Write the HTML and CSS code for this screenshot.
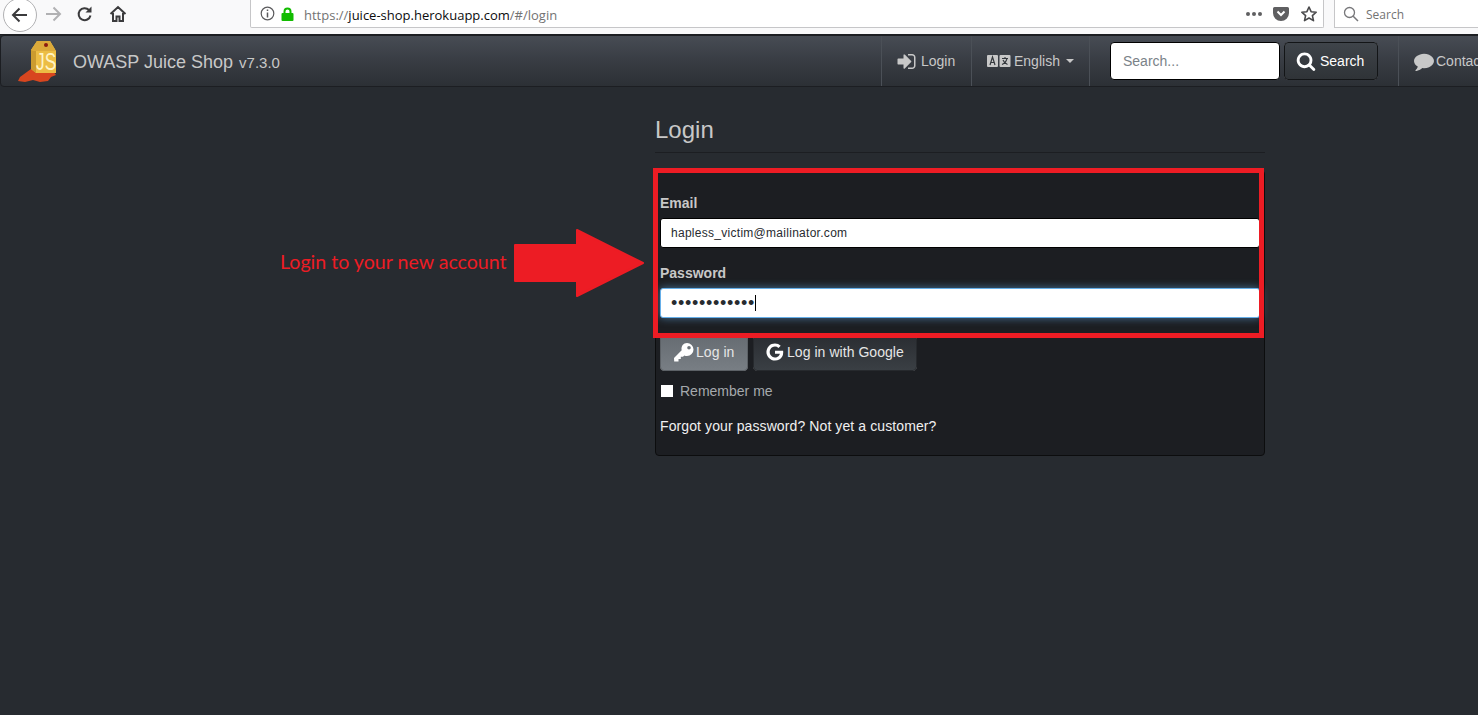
FILE: index.html
```html
<!DOCTYPE html>
<html lang="en">
<head>
  <meta charset="UTF-8">
  <title>OWASP Juice Shop</title>
  <link rel="stylesheet" href="styles.css">
</head>
<body>
<div id="app">

  <!-- browser toolbar -->
  <div class="toolbar">
    <div class="tool-back">
      <svg width="20" height="20" viewBox="0 0 20 20"><path d="M17 10H3M9.500 3.500L3 10l6.500 6.500" fill="none" stroke="#3b3b3d" stroke-width="2"/></svg>
    </div>
    <div class="tool-btn tool-forward">
      <svg width="20" height="20" viewBox="0 0 20 20"><path d="M3 10h14M10.500 3.500L17 10l-6.500 6.500" fill="none" stroke="#b1b1b3" stroke-width="2"/></svg>
    </div>
    <div class="tool-btn tool-reload">
      <svg width="18" height="18" viewBox="0 0 18 18"><path d="M14.500 10.500A6 6 0 1 1 13 5" fill="none" stroke="#3b3b3d" stroke-width="2"/><path d="M15.500 1.500v6h-6z" fill="#3b3b3d"/></svg>
    </div>
    <div class="tool-btn tool-home">
      <svg width="18" height="18" viewBox="0 0 18 18"><path d="M1.500 9L9 2l7.500 7M4 8v8h3.500v-4.500h3V16H14V8" fill="none" stroke="#3b3b3d" stroke-width="2"/></svg>
    </div>

    <div class="urlbar">
      <svg class="url-info" width="15" height="15" viewBox="0 0 15 15"><circle cx="7.500" cy="7.500" r="6.300" fill="none" stroke="#5a5a5c" stroke-width="1.200"/><path d="M7.500 6.500v5M7.500 3.500v1.600" stroke="#5a5a5c" stroke-width="1.500"/></svg>
      <svg class="url-lock" width="13" height="14" viewBox="0 0 13 14"><path d="M3.500 7V4.500a3 3 0 0 1 6 0V7" fill="none" stroke="#12bc00" stroke-width="2"/><rect x="0.500" y="6" width="12" height="8" rx="1" fill="#12bc00"/></svg>
      <span class="url-text"><span class="url-dim">https://</span>juice-shop.herokuapp.com<span class="url-dim">/#/login</span></span>
      <div class="url-actions">
        <span class="url-dots"><i></i><i></i><i></i></span>
        <svg width="16" height="16" viewBox="0 0 16 16"><path d="M1.500 1h13A1.500 1.500 0 0 1 16 2.500V7A8 8 0 0 1 0 7V2.500A1.500 1.500 0 0 1 1.500 1z" fill="#5f5f61"/><path d="M4.500 5.500L8 9l3.500-3.500" fill="none" stroke="#fff" stroke-width="2"/></svg>
        <svg width="18" height="18" viewBox="0 0 18 18"><path d="M9 2l2.100 4.700 5.100.5-3.800 3.400 1.100 5L9 13l-4.500 2.600 1.100-5L1.800 7.200l5.100-.5z" fill="none" stroke="#4a4a4c" stroke-width="1.600" stroke-linejoin="round"/></svg>
      </div>
    </div>

    <div class="searchbar">
      <svg width="16" height="16" viewBox="0 0 16 16"><circle cx="6.500" cy="6.500" r="5" fill="none" stroke="#77777a" stroke-width="1.300"/><path d="M10.200 10.200L15 15" stroke="#77777a" stroke-width="1.500"/></svg>
      <span class="searchbar-text">Search</span>
    </div>
  </div>

  <!-- site navbar -->
  <nav class="navbar">
    <a class="brand">
      <svg class="logo" width="41" height="44" viewBox="0 0 41 44">
        <path d="M1 41l2-4 11-8 6 3 16-1 3 4-5 2-3 4-8 1-7-2-8 2z" fill="#d8461f"/>
        <path d="M20 1h13l6 10v22H19l-5-4V10z" fill="#ecbd44"/>
        <path d="M14 10l5 1v22l-5-4z" fill="#cb9b2f"/>
        <path d="M20 1h13l6 10-20 0-5-1z" fill="#dcaa3a"/>
        <circle cx="29" cy="5" r="2" fill="#8b1a10"/>
        <text class="logo-js" transform="translate(19 30) scale(.72 1)">JS</text>
      </svg>
      <span class="brand-name">OWASP Juice Shop</span>
      <span class="brand-version">v7.3.0</span>
    </a>

    <a class="nav-item nav-login">
      <svg class="icon-signin" width="21" height="21" viewBox="0 0 1792 1792"><path d="M1312 896q0 26-19 45l-544 544q-19 19-45 19t-45-19-19-45v-288h-448q-26 0-45-19t-19-45v-384q0-26 19-45t45-19h448v-288q0-26 19-45t45-19 45 19l544 544q19 19 19 45zm352-352v704q0 119-84.500 203.500t-203.500 84.500h-320q-13 0-22.500-9.500t-9.500-22.500q0-4-1-20t-.5-26.500 3-23.500 10-19.500 20.500-6.500h320q66 0 113-47t47-113v-704q0-66-47-113t-113-47h-312l-11.500-1-11.500-3-8-5.500-7-9-2-13.500q0-4-1-20t-.5-26.500 3-23.500 10-19.500 20.500-6.500h320q119 0 203.500 84.500t84.500 203.500z"/></svg>
      Login
    </a>
    <a class="nav-item nav-lang">
      <svg class="icon-lang" width="24" height="12" viewBox="0 0 24 12">
        <rect width="11" height="12" rx="1"/><rect x="12.500" width="11" height="12" rx="1"/>
        <path d="M3 10l2.500-8 2.500 8M3.800 7.500h3.400" fill="none" stroke="#33373c" stroke-width="1.200"/>
        <path d="M15 3.500h6M18 2v1.500M20 3.500c-.8 3-2.700 5-5 6M16 5c.8 2 2.500 3.600 4.500 4.500" fill="none" stroke="#33373c" stroke-width="1.100"/>
      </svg>
      English
      <span class="caret"></span>
    </a>

    <form class="nav-search">
      <input class="search-input" type="text" placeholder="Search...">
      <button class="search-btn" type="button">
        <svg width="20" height="20" viewBox="0 0 1792 1792"><path fill="#fff" d="M1216 832q0-185-131.500-316.500t-316.500-131.500-316.500 131.500-131.500 316.500 131.500 316.500 316.500 131.500 316.500-131.500 131.500-316.500zm512 832q0 52-38 90t-90 38q-54 0-90-38l-343-342q-179 124-399 124-143 0-273.500-55.500t-225-150-150-225-55.500-273.500 55.500-273.500 150-225 225-150 273.500-55.500 273.500 55.500 225 150 150 225 55.500 273.500q0 220-124 399l343 343q37 37 37 90z"/></svg>
        Search
      </button>
    </form>

    <a class="nav-item nav-contact">
      <svg class="icon-comment" width="20" height="20" viewBox="0 0 1792 1792"><path d="M1792 896q0 174-120 321.500t-326 233-450 85.500q-70 0-145-8-198 175-460 242-49 14-114 22-17 2-30.500-9t-17.500-29v-1q-3-4-.5-12t2-10 4.500-9.500l6-9 7-8.500 8-9q7-8 31-34.500t34.500-38 31-39.500 32.500-51 27-59 26-76q-157-89-247.500-220t-90.500-281q0-130 71-248.500t191-204.500 286-136.500 348-50.500q244 0 450 85.500t326 233 120 321.500z"/></svg>
      Contact Us
    </a>
  </nav>

  <!-- login form -->
  <main class="login">
    <h3 class="login-title">Login</h3>
    <div class="well">
      <div class="form-group">
        <label>Email</label>
        <input class="form-input" type="text" value="hapless_victim@mailinator.com">
      </div>
      <div class="form-group">
        <label>Password</label>
        <div class="input-wrap">
          <input class="form-input form-input-focus" type="password" value="xxxxxxxxxxxx">
          <span class="input-caret"></span>
        </div>
      </div>
      <div class="form-buttons">
        <button class="btn btn-primary" type="button">
          <svg class="icon-key" width="21" height="20" viewBox="0 0 21 20">
            <path d="M14 1a6.500 6.500 0 0 1 0 13c-1 0-1.900-.2-2.700-.6L10 14.700H7.800V17H5.500v2.400H1.200L1 16l7.700-7.800C7.800 4.200 10.500 1 14 1zm2 3a1.800 1.800 0 1 0 0 3.600A1.800 1.800 0 0 0 16 4z" fill-rule="evenodd"/>
          </svg>
          Log in
        </button>
        <button class="btn btn-default" type="button">
          <svg width="20" height="20" viewBox="0 0 1792 1792"><path fill="#fff" d="M896 786h725q12 67 12 128 0 217-91 387.500t-259.500 266.500-386.500 96q-157 0-299-60.500t-245-163.500-163.500-245-60.500-299 60.500-299 163.500-245 245-163.500 299-60.500q300 0 515 201l-209 201q-123-119-306-119-129 0-238.500 65t-173.500 176.500-64 243.500 64 243.500 173.500 176.500 238.500 65q87 0 160-24t120-60 82-82 51.500-87 22.500-78h-436v-264z"/></svg>
          Log in with Google
        </button>
      </div>
      <div class="remember"><span class="check"></span>Remember me</div>
      <div class="forgot"><a>Forgot your password?</a> <a>Not yet a customer?</a></div>
    </div>
  </main>

  <!-- annotation drawn over the screenshot -->
  <div class="note-box"></div>
  <span class="note-text">Login to your new account</span>
  <svg class="note-arrow" width="132" height="70" viewBox="0 0 132 70">
    <path d="M2 17h62V2l66 33-66 33V53H2z" fill="#ed1c24" stroke="#ed1c24" stroke-width="2" stroke-linejoin="round"/>
  </svg>
</div>
</body>
</html>
```

FILE: styles.css
```css
html, body {
  margin: 0;
  height: 100%;
  overflow: hidden;
}

body {
  background-color: #272b30;
  font-family: "Liberation Sans", Arial, sans-serif;
  font-size: 14px;
  line-height: 20px;
  color: #c8c8c8;
}

#app {
  position: relative;
  height: 715px;
  overflow: hidden;
}

/* browser toolbar */
.toolbar {
  display: flex;
  align-items: flex-start;
  height: 35px;
  box-sizing: border-box;
  background-color: #f9f9fa;
  overflow: hidden;
  border-bottom: 1px solid #1c1e22;
}

.tool-back {
  display: flex;
  align-items: center;
  justify-content: center;
  flex: none;
  width: 32px;
  height: 32px;
  margin: -2px 0 0 3px;
  border: 1px solid #b1b1b3;
  border-radius: 50%;
  background-color: #fff;
}

.tool-btn {
  display: flex;
  align-items: center;
  justify-content: center;
  flex: none;
  height: 28px;
}

.tool-forward { width: 20px; margin-left: 6px; }
.tool-reload { width: 18px; margin-left: 13px; }
.tool-home { width: 18px; margin-left: 15px; }

.urlbar {
  display: flex;
  align-items: center;
  flex: none;
  width: 1074px;
  height: 28px;
  margin-left: 123px;
  padding-left: 9px;
  box-sizing: border-box;
  background-color: #fff;
  border: 1px solid #c6c6c8;
  border-top: 0;
  border-radius: 0 0 2px 2px;
}

.url-lock { margin-left: 6px; }

.url-text {
  margin: 2px 0 0 10px;
  font-family: "Open Sans", sans-serif;
  font-size: 13px;
  color: #0c0c0d;
}

.url-dim { color: #737373; }

.url-actions {
  display: flex;
  align-items: center;
  gap: 11px;
  margin-left: auto;
  padding-right: 5px;
}

.url-dots {
  display: flex;
  gap: 2px;
}

.url-dots i {
  width: 4px;
  height: 4px;
  border-radius: 50%;
  background-color: #5f5f61;
}

.searchbar {
  display: flex;
  align-items: center;
  flex: none;
  gap: 7px;
  width: 200px;
  height: 28px;
  margin-left: 10px;
  padding-left: 8px;
  box-sizing: border-box;
  background-color: #fff;
  border: 1px solid #c6c6c8;
  border-top: 0;
  font-family: "Open Sans", sans-serif;
  font-size: 12px;
  color: #737373;
}

.searchbar-text { margin-top: 2px; }

/* navbar */
.navbar {
  display: flex;
  align-items: stretch;
  width: 1600px;
  height: 52px;
  box-sizing: border-box;
  background-image: linear-gradient(#474c54, #383c43 50%, #2c3035);
  border: 1px solid #1c1e22;
  border-radius: 4px;
}

.brand {
  display: flex;
  align-items: center;
  flex: 0 0 880px;
  box-sizing: border-box;
  padding-left: 16px;
}

.logo { flex: none; margin-top: 2px; }

.logo-js {
  font-family: "Liberation Sans", sans-serif;
  font-size: 24px;
  fill: #fff4c4;
}

.brand-name {
  margin: 2px 0 0 15px;
  font-size: 18px;
  color: #c8c8c8;
}

.brand-version {
  margin: 4px 0 0 6px;
  font-size: 15px;
}

.nav-item {
  display: flex;
  align-items: center;
  flex: none;
  box-sizing: border-box;
  border-left: 1px solid #4b5057;
  color: #c8c8c8;
}

.nav-item svg { fill: #c8c8c8; }

.nav-login { width: 90px; padding-left: 14px; }
.nav-login svg { margin-right: 4px; }

.nav-lang { width: 118px; padding-left: 15px; }
.nav-lang svg { margin-right: 3px; }

.caret {
  width: 0;
  height: 0;
  margin-left: 6px;
  border-top: 4px solid #c8c8c8;
  border-left: 4px solid transparent;
  border-right: 4px solid transparent;
}

.nav-search {
  display: flex;
  align-items: center;
  flex: none;
  gap: 4px;
  width: 309px;
  box-sizing: border-box;
  margin: 0;
  padding-left: 20px;
  border-left: 1px solid #4b5057;
}

.search-input {
  width: 170px;
  height: 38px;
  box-sizing: border-box;
  padding: 0 12px;
  background-color: #fff;
  border: 1px solid #000;
  border-radius: 4px;
  font-family: inherit;
  font-size: 14px;
}

.search-input::placeholder { color: #7a8288; opacity: 1; }

.search-btn {
  display: flex;
  align-items: center;
  gap: 4px;
  width: 94px;
  height: 38px;
  box-sizing: border-box;
  padding: 0 0 0 11px;
  background-image: linear-gradient(#3f444a, #2f3337);
  border: 1px solid #131517;
  border-radius: 4px;
  font-family: inherit;
  font-size: 14px;
  color: #fff;
}

.nav-contact { width: 200px; padding-left: 15px; }
.nav-contact svg { margin-right: 2px; }

/* login */
.login {
  width: 610px;
  margin-left: 655px;
}

.login-title {
  margin: 30px 0 17px;
  padding-bottom: 9px;
  font-size: 24px;
  font-weight: 400;
  line-height: 26px;
  border-bottom: 1px solid #1c1e22;
}

.well {
  height: 262px;
  padding: 22px 4px 0;
  background-color: #1c1e22;
  border: 1px solid #0c0d0e;
  border-radius: 4px;
}

.form-group { margin-bottom: 15px; }

.form-group label {
  display: block;
  margin-bottom: 5px;
  font-weight: 700;
}

.form-input {
  display: block;
  width: 100%;
  height: 30px;
  box-sizing: border-box;
  padding: 0 10px;
  background-color: #fff;
  border: 1px solid #000;
  border-radius: 3px;
  font-family: inherit;
  font-size: 12px;
  letter-spacing: .28px;
  color: #272b30;
}

.form-input-focus {
  border-color: #66afe9;
  box-shadow: 0 0 8px rgba(102, 175, 233, .6);
  outline: 0;
  font-size: 18px;
  letter-spacing: .7px;
}

.input-wrap { position: relative; }

.input-caret {
  position: absolute;
  left: 95px;
  top: 7px;
  width: 1px;
  height: 16px;
  background-color: #000;
}

.form-buttons {
  display: flex;
  gap: 5px;
  margin-top: 17px;
}

.btn {
  display: flex;
  align-items: center;
  height: 36px;
  box-sizing: border-box;
  border-radius: 4px;
  padding-bottom: 2px;
  font-family: inherit;
  font-size: 14px;
  letter-spacing: .05px;
  color: #fff;
}

.btn-primary {
  gap: 2px;
  width: 88px;
  padding-left: 12px;
  padding-right: 0;
  padding-top: 0;
  background-image: linear-gradient(#666c72, #787e84);
  border: 1px solid #5c6166;
  color: #e6e6e6;
}

.btn-primary svg { fill: #fff; }

.btn-default {
  gap: 2px;
  width: 164px;
  padding-left: 11px;
  padding-right: 0;
  padding-top: 0;
  background-image: linear-gradient(#2a2d32, #3a3f44);
  border: 1px solid #26292d;
  color: #e6e6e6;
}

.remember {
  display: flex;
  align-items: center;
  margin-top: 10px;
  color: #a5a9ad;
}

.check {
  width: 12px;
  height: 12px;
  margin: 0 7px 0 1px;
  background-color: #fff;
}

.forgot {
  margin-top: 15px;
  letter-spacing: .1px;
  color: #f0f0f0;
}

/* annotation */
.note-box {
  position: absolute;
  left: 653px;
  top: 168px;
  width: 601px;
  height: 160px;
  border: 5px solid #ed1c24;
}

.note-text {
  position: absolute;
  left: 280px;
  top: 250px;
  font-family: Lato, sans-serif;
  font-size: 19.6px;
  line-height: 24px;
  color: #ed1c24;
}

.note-arrow {
  position: absolute;
  left: 513px;
  top: 228px;
}
```
